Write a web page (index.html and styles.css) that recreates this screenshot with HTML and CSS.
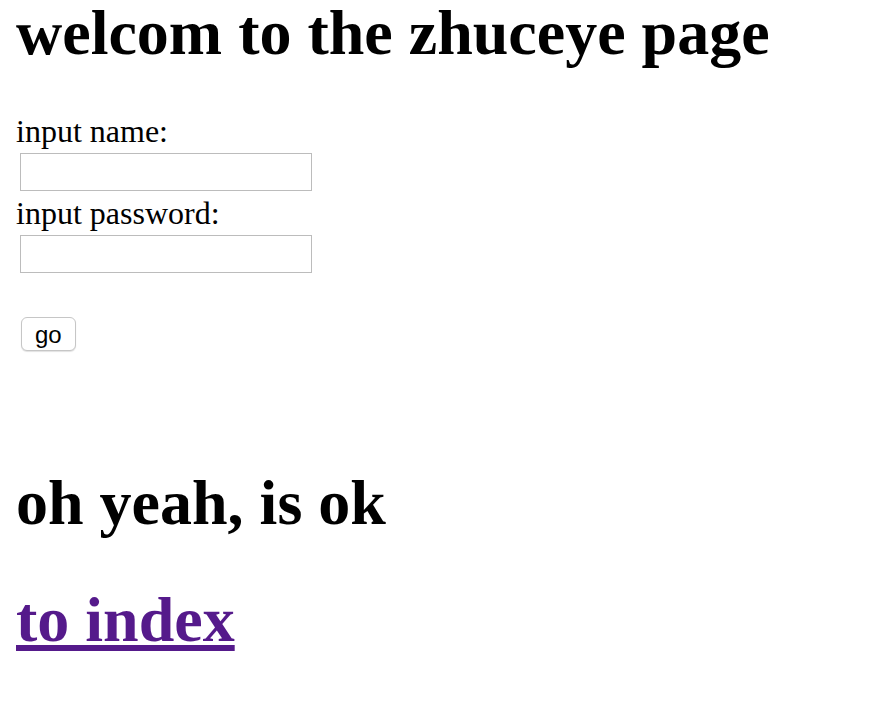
FILE: index.html
```html
<!DOCTYPE html>
<html>
<head>
<meta charset="utf-8">
<title>zhuceye</title>
<link rel="stylesheet" href="styles.css">
</head>
<body class="page">
<h1 class="heading title">welcom to the zhuceye page</h1>
<form class="form">
  <label class="field-label" for="name">input name:</label>
  <input class="field" id="name" type="text">
  <label class="field-label" for="pwd">input password:</label>
  <input class="field" id="pwd" type="password">
  <button class="go" type="button">go</button>
</form>
<h1 class="heading status">oh yeah, is ok</h1>
<h1 class="heading link-head"><a class="index-link" href="#">to index</a></h1>
</body>
</html>
```
FILE: styles.css
```css
html, body {
  background: #fff;
}
.page {
  margin: 0 16px;
  font-family: "Liberation Serif", "Times New Roman", serif;
  font-size: 32px;
  line-height: 37px;
  color: #000;
}
.heading {
  font-size: 64px;
  line-height: 74px;
  font-weight: bold;
  margin: 0;
}
.title {
  line-height: 66px;
  margin-bottom: 47px;
}
.form {
  display: flex;
  flex-direction: column;
  align-items: flex-start;
  margin: 0;
}
.field-label {
  display: block;
}
.field {
  box-sizing: border-box;
  width: 292px;
  height: 38px;
  margin: 3px 0 4px 4px;
  border: 1px solid #bcbcbc;
  border-radius: 0;
  background: #fff;
  padding: 0 4px;
  font-size: 16px;
}
.go {
  box-sizing: border-box;
  height: 34px;
  margin: 40px 0 0 5px;
  padding: 2px 13px 0;
  border: 1px solid #c6c6c6;
  border-radius: 6px;
  background: #fff;
  box-shadow: 0 1px 1px rgba(0,0,0,0.12);
  font-family: "Liberation Sans", Arial, sans-serif;
  font-size: 24px;
  line-height: 26px;
  color: #000;
}
.status {
  margin-top: 115px;
  margin-bottom: 43px;
}
.index-link {
  color: #551a8b;
  text-decoration: underline;
}
```
